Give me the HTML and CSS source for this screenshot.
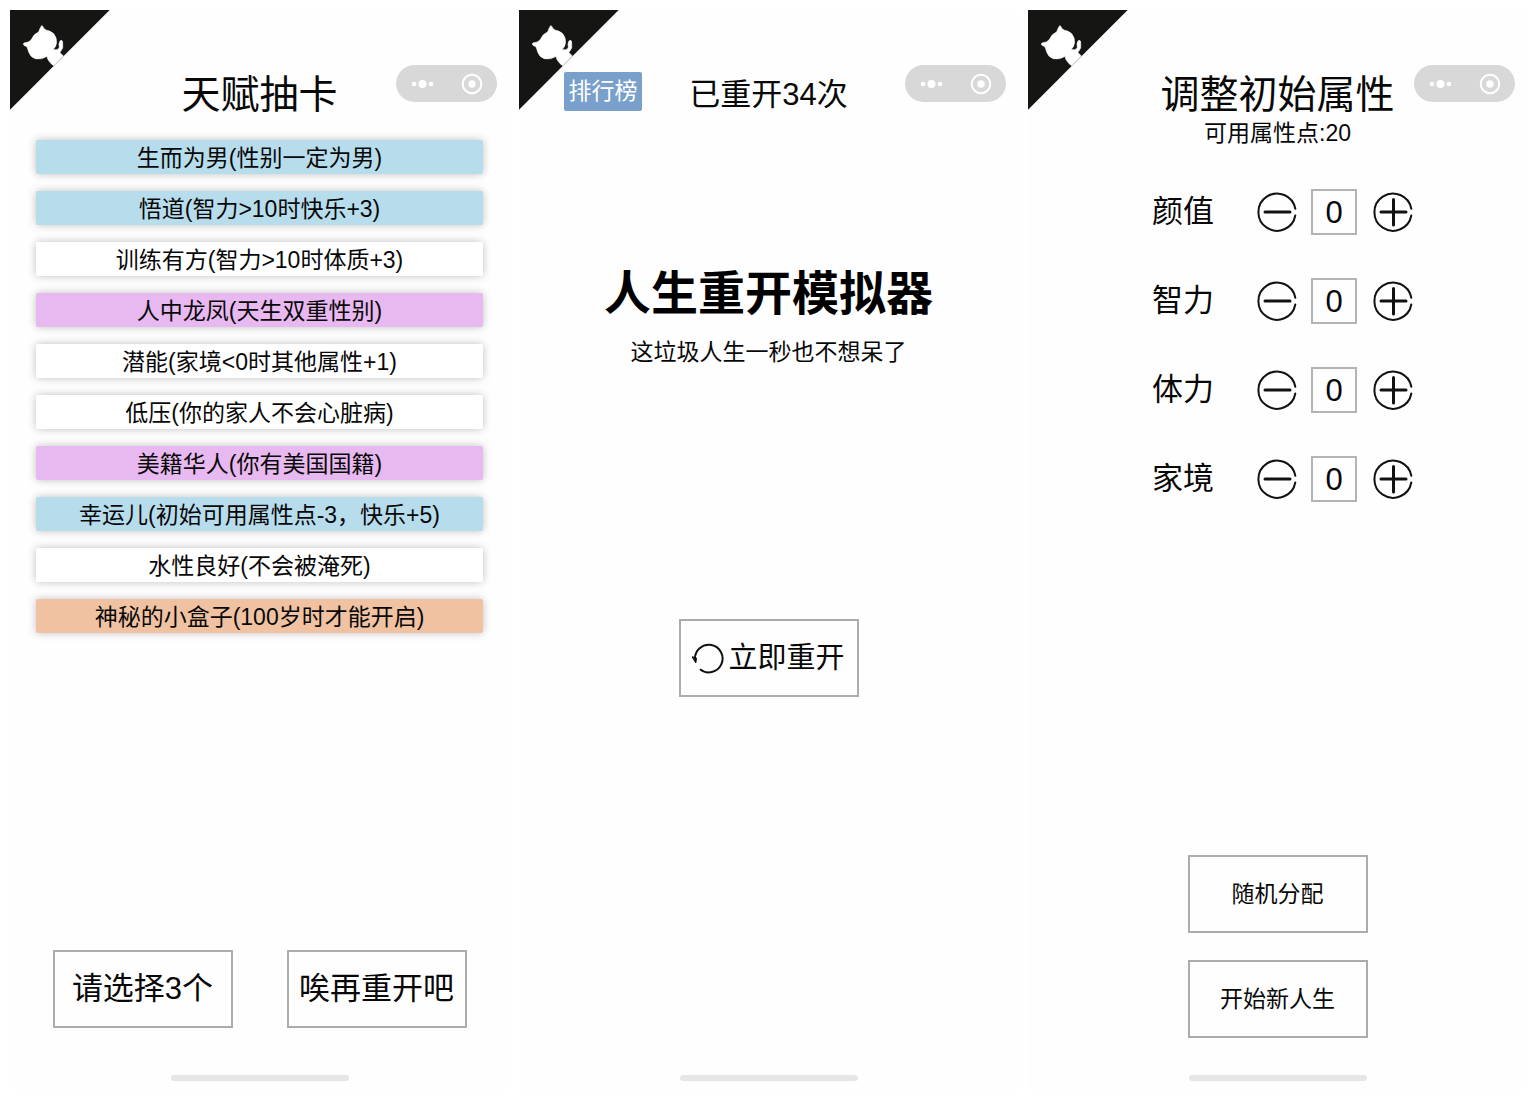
FILE: index.html
```html
<!DOCTYPE html>
<html lang="zh-CN">
<head>
<meta charset="utf-8">
<meta name="viewport" content="width=device-width, initial-scale=1">
<title>人生重开模拟器</title>
<link rel="stylesheet" href="styles.css">
</head>
<body>
<svg class="defs" width="0" height="0" aria-hidden="true">
  <symbol id="corner" viewBox="0 0 300 300">
    <path fill="#151513" d="M0 0H299L0 299Z"/>
    <path fill="#fff" stroke="#fff" stroke-width="2" stroke-linejoin="round" d="M95 47Q98 46 102 56Q107 61 118 63Q133 68 138 84Q142 99 136 110L129 119Q141 121 146 116Q150 112 147 104Q148 92 153 91Q159 91 158 101Q160 114 154 121Q150 125 150 128L160 138L132 167Q122 162 117 153Q112 147 111 139Q96 150 76 146Q62 141 57 128L52 113Q50 109 42 106Q38 102 42 99L55 96Q64 91 67 84Q70 74 86 66Q90 54 95 47Z"/>
    <path fill="none" stroke="#bbb" stroke-width="2" d="M160 139L133 166"/>
  </symbol>
  <symbol id="dots" viewBox="0 0 24 10">
    <circle cx="3" cy="5" r="2.3"/><circle cx="11.5" cy="5" r="4"/><circle cx="20" cy="5" r="2.3"/>
  </symbol>
  <symbol id="target" viewBox="0 0 22 22">
    <circle cx="11" cy="11" r="9.3" fill="none" stroke="#fff" stroke-width="2"/><circle cx="11" cy="11" r="3.7"/>
  </symbol>
  <symbol id="minus" viewBox="0 0 40 40">
    <path d="M38.3 16.8A18.6 18.6 0 1 0 38.3 23.5" stroke-width="2"/>
    <path d="M8 20H33" stroke-width="3"/>
  </symbol>
  <symbol id="plus" viewBox="0 0 40 40">
    <path d="M38.3 16.8A18.6 18.6 0 1 0 38.3 23.5" stroke-width="2"/>
    <path d="M8 20H33M20.5 7.5V33" stroke-width="3"/>
  </symbol>
  <symbol id="restart" viewBox="0 0 32 32">
    <path d="M8 27.2A13.8 13.8 0 1 0 3 17.5" fill="none" stroke="#111" stroke-width="2"/>
    <path d="M0 14.7L4.5 16L3.8 21Z" fill="#111" stroke="#111"/>
  </symbol>
</svg>

<main class="screens">
  <section class="screen">
    <a class="corner" href="#" aria-label="GitHub"><svg><use href="#corner"/></svg></a>
    <header class="header">
      <h1 class="title">天赋抽卡</h1>
      <div class="capsule">
        <button class="capsule-btn" aria-label="更多"><svg class="dots"><use href="#dots"/></svg></button>
        <button class="capsule-btn" aria-label="关闭"><svg class="target"><use href="#target"/></svg></button>
      </div>
    </header>
    <div class="talents">
      <button class="talent blue">生而为男(性别一定为男)</button>
      <button class="talent blue">悟道(智力&gt;10时快乐+3)</button>
      <button class="talent">训练有方(智力&gt;10时体质+3)</button>
      <button class="talent purple">人中龙凤(天生双重性别)</button>
      <button class="talent">潜能(家境&lt;0时其他属性+1)</button>
      <button class="talent">低压(你的家人不会心脏病)</button>
      <button class="talent purple">美籍华人(你有美国国籍)</button>
      <button class="talent blue">幸运儿(初始可用属性点-3，快乐+5)</button>
      <button class="talent">水性良好(不会被淹死)</button>
      <button class="talent orange">神秘的小盒子(100岁时才能开启)</button>
    </div>
    <div class="actions row">
      <button class="box-btn large">请选择3个</button>
      <button class="box-btn large">唉再重开吧</button>
    </div>
    <div class="home-bar"></div>
  </section>

  <section class="screen">
    <a class="corner" href="#" aria-label="GitHub"><svg><use href="#corner"/></svg></a>
    <header class="header">
      <button class="rank">排行榜</button>
      <p class="title count">已重开34次</p>
      <div class="capsule">
        <button class="capsule-btn" aria-label="更多"><svg class="dots"><use href="#dots"/></svg></button>
        <button class="capsule-btn" aria-label="关闭"><svg class="target"><use href="#target"/></svg></button>
      </div>
    </header>
    <div class="hero">
      <h1 class="hero-title">人生重开模拟器</h1>
      <p class="hero-sub">这垃圾人生一秒也不想呆了</p>
      <button class="box-btn start"><svg class="restart"><use href="#restart"/></svg>立即重开</button>
    </div>
    <div class="home-bar"></div>
  </section>

  <section class="screen">
    <a class="corner" href="#" aria-label="GitHub"><svg><use href="#corner"/></svg></a>
    <header class="header">
      <h1 class="title">调整初始属性</h1>
      <div class="capsule">
        <button class="capsule-btn" aria-label="更多"><svg class="dots"><use href="#dots"/></svg></button>
        <button class="capsule-btn" aria-label="关闭"><svg class="target"><use href="#target"/></svg></button>
      </div>
    </header>
    <p class="points">可用属性点:20</p>
    <div class="attrs">
      <div class="attr">
        <label for="looks">颜值</label>
        <button class="step" aria-label="减少颜值"><svg><use href="#minus"/></svg></button>
        <input id="looks" type="text" inputmode="numeric" value="0">
        <button class="step" aria-label="增加颜值"><svg><use href="#plus"/></svg></button>
      </div>
      <div class="attr">
        <label for="mind">智力</label>
        <button class="step" aria-label="减少智力"><svg><use href="#minus"/></svg></button>
        <input id="mind" type="text" inputmode="numeric" value="0">
        <button class="step" aria-label="增加智力"><svg><use href="#plus"/></svg></button>
      </div>
      <div class="attr">
        <label for="body">体力</label>
        <button class="step" aria-label="减少体力"><svg><use href="#minus"/></svg></button>
        <input id="body" type="text" inputmode="numeric" value="0">
        <button class="step" aria-label="增加体力"><svg><use href="#plus"/></svg></button>
      </div>
      <div class="attr">
        <label for="family">家境</label>
        <button class="step" aria-label="减少家境"><svg><use href="#minus"/></svg></button>
        <input id="family" type="text" inputmode="numeric" value="0">
        <button class="step" aria-label="增加家境"><svg><use href="#plus"/></svg></button>
      </div>
    </div>
    <div class="actions column">
      <button class="box-btn">随机分配</button>
      <button class="box-btn">开始新人生</button>
    </div>
    <div class="home-bar"></div>
  </section>
</main>
</body>
</html>
```

FILE: styles.css
```css
* {
  box-sizing: border-box;
}

body {
  margin: 0;
  background: #fff;
  color: #080808;
  font-family: "Liberation Sans", "Noto Sans CJK SC", sans-serif;
  font-size: 23px;
}

h1,
p {
  margin: 0;
  font-weight: 400;
}

button,
input {
  margin: 0;
  padding: 0;
  border: 0;
  background: none;
  color: inherit;
  font: inherit;
}

svg {
  display: block;
}

.defs {
  position: absolute;
}

.screens {
  display: grid;
  grid-template-columns: repeat(3, 1fr);
  gap: 10px;
  min-height: 100vh;
  padding: 10px;
}

.screen {
  position: relative;
  display: flex;
  flex-direction: column;
  align-items: center;
  padding: 55px 0 9px;
  background: #fefefe;
}

.corner {
  position: absolute;
  top: 0;
  left: 0;
}

.corner svg {
  width: 100px;
  height: 100px;
}

/* Header: optional rank button, centred title, system capsule */
.header {
  display: grid;
  grid-template-columns: 1fr auto 1fr;
  align-items: start;
  width: 100%;
}

.title {
  grid-column: 2;
  grid-row: 1;
  margin-top: 7px;
  font-size: 39px;
  line-height: 46px;
}

.count {
  font-size: 31px;
}

.rank {
  grid-column: 1;
  grid-row: 1;
  z-index: 1;
  justify-self: start;
  width: 78px;
  height: 39px;
  margin: 7px 0 0 45px;
  border-radius: 2px;
  background: #799fcb;
  color: #fff;
  line-height: 39px;
}

.capsule {
  grid-column: 3;
  grid-row: 1;
  justify-self: end;
  display: flex;
  width: 101px;
  height: 37px;
  margin-right: 12px;
  border-radius: 19px;
  background: #d8d8d8;
}

.capsule-btn {
  display: flex;
  flex: 1;
  align-items: center;
  justify-content: center;
  fill: #fff;
}

.dots {
  width: 24px;
  height: 10px;
  margin-left: 4px;
}

.target {
  width: 22px;
  height: 22px;
}

/* Talent cards */
.talents {
  display: flex;
  flex-direction: column;
  gap: 17px;
  width: 100%;
  margin-top: 22px;
  padding: 0 26px;
}

.talent {
  height: 34px;
  padding-top: 2px;
  border-radius: 2px;
  background: #fff;
  box-shadow: 0 0 8px rgba(0, 0, 0, 0.25);
  line-height: 32px;
}

.blue {
  background: #b7dcec;
}

.purple {
  background: #e8b8f0;
}

.orange {
  background: #f0c2a2;
}

/* Outlined buttons */
.box-btn {
  display: flex;
  align-items: center;
  justify-content: center;
  width: 180px;
  height: 78px;
  border: 2px solid #acacac;
  line-height: 40px;
}

.large {
  font-size: 31px;
}

.actions {
  display: flex;
  margin-top: auto;
}

.row {
  gap: 54px;
  margin-bottom: 47px;
}

.column {
  flex-direction: column;
  gap: 27px;
  margin-bottom: 37px;
}

.home-bar {
  width: 178px;
  height: 6px;
  border-radius: 3px;
  background: #e6e6e6;
}

/* Start screen */
.hero {
  display: flex;
  flex: 1;
  flex-direction: column;
  align-items: center;
  margin-top: 142px;
}

.hero-title {
  color: #000;
  font-size: 47px;
  font-weight: 700;
  line-height: 68px;
}

.hero-sub {
  margin-top: 7px;
  line-height: 34px;
}

.start {
  gap: 4px;
  margin-top: 250px;
  font-size: 29px;
}

.restart {
  width: 32px;
  height: 32px;
}

/* Attribute steppers */
.points {
  line-height: 30px;
}

.attrs {
  display: flex;
  flex-direction: column;
  gap: 43px;
  margin-top: 41px;
  padding-left: 10px;
}

.attr {
  display: flex;
  align-items: center;
  gap: 14px;
  height: 46px;
  font-size: 31px;
}

.attr label {
  margin-right: 29px;
  line-height: 46px;
}

.attr input {
  width: 46px;
  height: 46px;
  margin-right: 2px;
  padding-top: 2px;
  border: 2px solid #b4b4b4;
  text-align: center;
}

.step svg {
  width: 40px;
  height: 40px;
  fill: none;
  stroke: #111;
  stroke-linecap: round;
}
```
